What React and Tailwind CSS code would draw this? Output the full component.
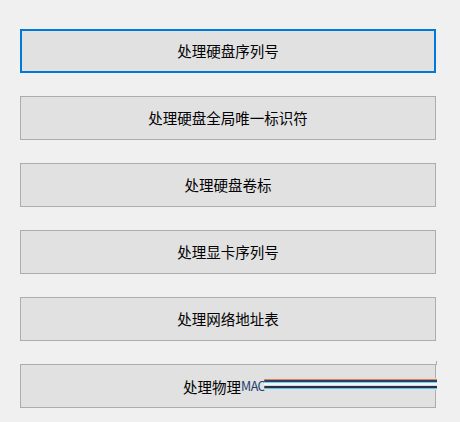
const labels = [
  "处理硬盘序列号",
  "处理硬盘全局唯一标识符",
  "处理硬盘卷标",
  "处理显卡序列号",
  "处理网络地址表",
];

const font = { fontFamily: '"Microsoft YaHei", "Noto Sans CJK SC", sans-serif' };

function ToolButton({ label, focused }) {
  return (
    <button
      className={
        "flex h-[44px] w-[416px] items-center justify-center bg-[#e1e1e1] text-[14.5px] text-black " +
        (focused ? "border-2 border-[#0078d7]" : "border border-[#adadad]")
      }
    >
      {label}
    </button>
  );
}

// the last button, caught mid-repaint: the tail of its label smeared into a streak
function GlitchButton() {
  return (
    <div className="relative h-[44px] w-[416px]">
      <div className="flex h-full w-full items-center border border-[#adadad] bg-[#e1e1e1] pl-[162px] pt-[1px] text-[14.5px] text-black">
        <span>处理物理</span>
        <span className="text-[12.5px] tracking-[-0.5px] text-[#24406e]">MAC</span>
      </div>
      <div className="absolute right-[-1px] top-[-3px] h-[4px] w-[1px] bg-[#adadad]" />
      <div className="absolute left-[244px] top-[14px] flex w-[173px] flex-col">
        <div className="h-[1px] bg-[#f1d6e2]" />
        <div className="h-[1px] rounded-l-full bg-[#c98a52]" />
        <div className="h-[2px] rounded-l-full bg-[#2e3c68]" />
        <div className="h-[1px] bg-[#6ad6e6]" />
        <div className="h-[2px] bg-[#f6f4f8]" />
        <div className="h-[1px] bg-[#d6dae6]" />
        <div className="h-[2px] rounded-l-full bg-[#283044]" />
        <div className="h-[1px] rounded-l-full bg-[#55c8da]" />
        <div className="h-[1px] bg-[#e6dae6]" />
      </div>
    </div>
  );
}

export default function App() {
  return (
    <div className="h-[422px] w-[460px] bg-[#f0f0f0]" style={font}>
      <div className="flex flex-col gap-[23px] pl-[20px] pt-[29px]">
        {labels.map((label, i) => (
          <ToolButton key={label} label={label} focused={i === 0} />
        ))}
        <GlitchButton />
      </div>
    </div>
  );
}
